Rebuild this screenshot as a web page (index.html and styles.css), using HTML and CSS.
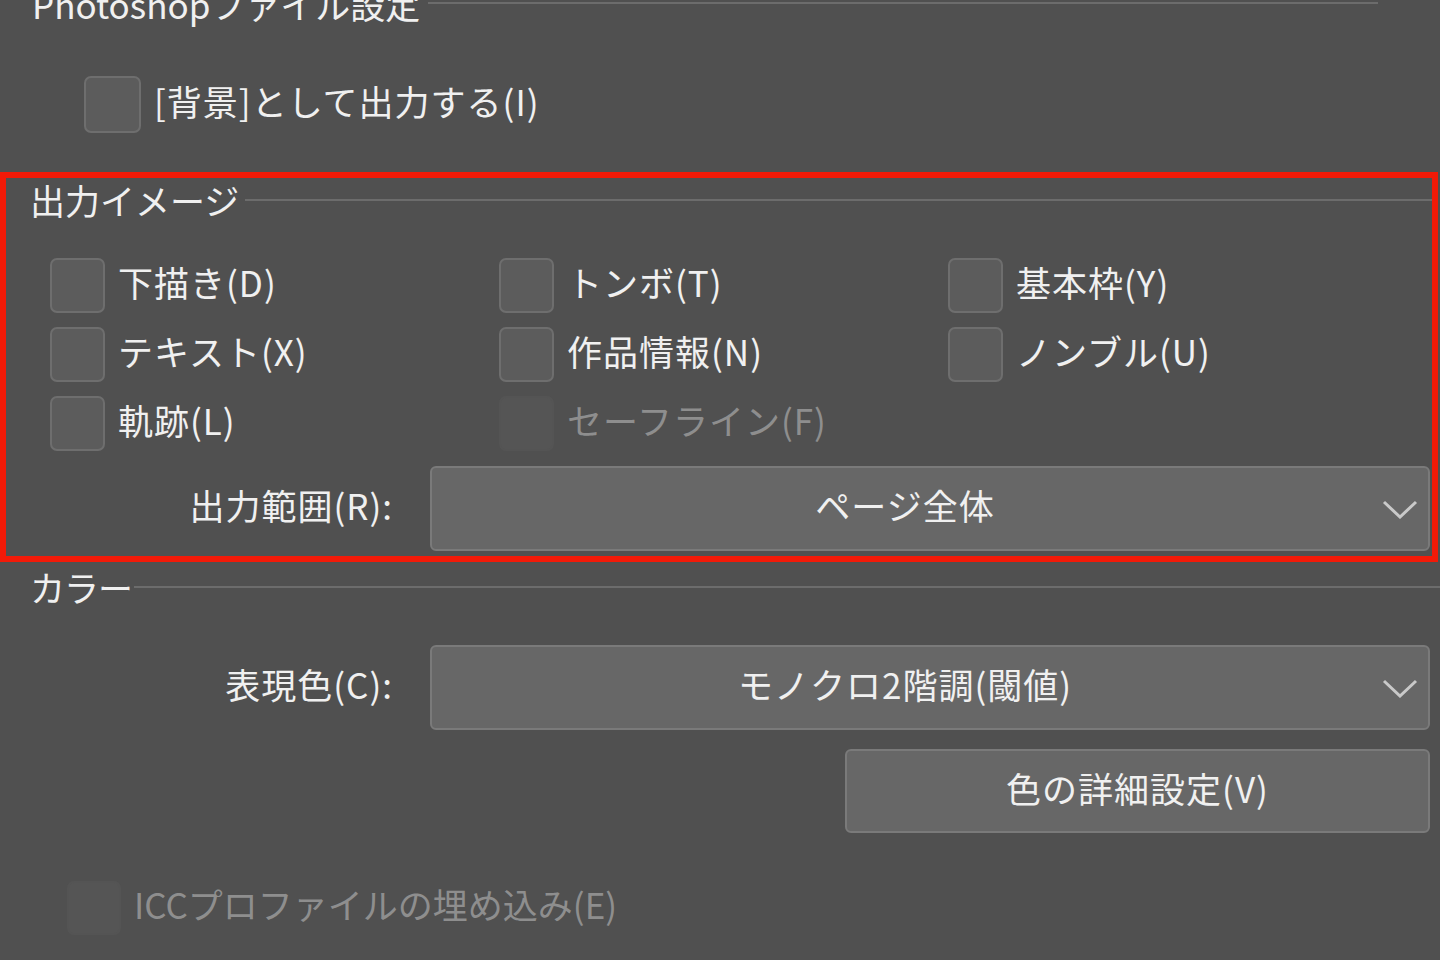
FILE: index.html
```html
<!DOCTYPE html>
<html lang="ja">
<head>
<meta charset="utf-8">
<title>書き出し設定</title>
<link rel="stylesheet" href="styles.css">
</head>
<body>
<div class="page">
  <section class="group group-ps">
    <div class="legend legend-ps"><span class="legend-text">Photoshopファイル設定</span><i class="rule"></i></div>
    <label class="check check-bg"><span class="box box-lg"></span><span class="check-label">[背景]として出力する(I)</span></label>
  </section>

  <section class="group group-image">
    <div class="legend legend-image"><span class="legend-text">出力イメージ</span><i class="rule"></i></div>
    <div class="grid">
      <label class="check"><span class="box"></span><span class="check-label">下描き(D)</span></label>
      <label class="check"><span class="box"></span><span class="check-label">トンボ(T)</span></label>
      <label class="check"><span class="box"></span><span class="check-label">基本枠(Y)</span></label>
      <label class="check"><span class="box"></span><span class="check-label">テキスト(X)</span></label>
      <label class="check"><span class="box"></span><span class="check-label">作品情報(N)</span></label>
      <label class="check"><span class="box"></span><span class="check-label">ノンブル(U)</span></label>
      <label class="check"><span class="box"></span><span class="check-label">軌跡(L)</span></label>
      <label class="check disabled"><span class="box"></span><span class="check-label">セーフライン(F)</span></label>
    </div>
    <div class="field field-range">
      <span class="field-label">出力範囲(R):</span>
      <div class="select">
        <span class="select-text">ページ全体</span>
        <svg class="chev" viewBox="0 0 36 20" width="36" height="20"><polyline points="2,3 18,18 34,3" fill="none" stroke="#c9c9c9" stroke-width="3"/></svg>
      </div>
    </div>
  </section>

  <section class="group group-color">
    <div class="legend legend-color"><span class="legend-text">カラー</span><i class="rule"></i></div>
    <div class="field field-color">
      <span class="field-label">表現色(C):</span>
      <div class="select">
        <span class="select-text">モノクロ2階調(閾値)</span>
        <svg class="chev" viewBox="0 0 36 20" width="36" height="20"><polyline points="2,3 18,18 34,3" fill="none" stroke="#c9c9c9" stroke-width="3"/></svg>
      </div>
    </div>
    <div class="btn-row"><button class="btn" type="button"><span class="btn-text">色の詳細設定(V)</span></button></div>
    <label class="check disabled check-icc"><span class="box"></span><span class="check-label">ICCプロファイルの埋め込み(E)</span></label>
  </section>
</div>
</body>
</html>
```
FILE: styles.css
```css
* { box-sizing: border-box; }
html, body {
  margin: 0;
  padding: 0;
  background: #505050;
}
body {
  width: 1440px;
  height: 960px;
  overflow: hidden;
  font-family: "Noto Sans CJK JP", "Noto Sans", sans-serif;
  font-size: 35px;
  line-height: 40px;
  letter-spacing: 1px;
  color: #f0f0f0;
}
.page {
  width: 1440px;
}
.legend {
  display: flex;
  align-items: center;
  height: 40px;
}
.legend-text {
  white-space: nowrap;
  padding-bottom: 4px;
  letter-spacing: 0;
}
.rule {
  flex: 1;
  height: 2px;
  background: #6c6c6c;
  margin-left: 8px;
}
.legend-ps {
  margin-top: -14px;
  padding-left: 32px;
}
.legend-ps .rule {
  margin-right: 62px;
  margin-top: -6px;
}
.check {
  display: flex;
  align-items: center;
  height: 55px;
}
.box {
  width: 55px;
  height: 55px;
  border: 2px solid #6e6e6e;
  background: #5c5c5c;
  border-radius: 7px;
  flex: none;
}
.box-lg {
  width: 57px;
  height: 57px;
}
.check-label {
  margin-left: 13px;
  white-space: nowrap;
  padding-bottom: 7px;
}
.check-bg {
  margin-top: 50px;
  padding-left: 84px;
  height: 57px;
}
.disabled .box {
  border-color: #545454;
  background: #555555;
}
.disabled .check-label {
  color: #8e8e8e;
}

.group-image {
  margin-top: 39px;
  width: 1438px;
  border: 6px solid #f21a08;
  padding: 4px 0 5px 0;
}
.legend-image {
  padding-left: 24px;
}
.legend-image .rule {
  margin-left: 6px;
  margin-top: -4px;
}
.grid {
  margin-top: 36px;
  padding-left: 44px;
  display: grid;
  grid-template-columns: 449px 449px 1fr;
  grid-auto-rows: 55px;
  row-gap: 14px;
}
.field {
  display: flex;
  align-items: center;
}
.field-label {
  text-align: right;
  white-space: nowrap;
  padding-bottom: 7px;
}
.field-range {
  margin-top: 15px;
}
.field-range .field-label {
  width: 387px;
}
.field-range .select {
  margin-right: 2px;
}
.select {
  flex: 1;
  margin-left: 37px;
  height: 85px;
  display: flex;
  align-items: center;
  background: #676767;
  border: 2px solid #7a7a7a;
  border-radius: 6px;
}
.select-text {
  flex: 1;
  text-align: center;
  white-space: nowrap;
  padding-bottom: 7px;
}
.chev {
  flex: none;
  margin: 0 10px 0 4px;
}

.legend-color {
  margin-top: 7px;
  padding-left: 30px;
}
.legend-color .rule {
  margin-left: 2px;
  margin-top: -4px;
}
.legend-color .legend-text {
  letter-spacing: -1px;
}
.field-color {
  margin-top: 36px;
}
.field-color .field-label {
  width: 393px;
}
.field-color .select {
  margin-right: 10px;
}
.btn-row {
  margin-top: 19px;
  padding-left: 845px;
}
.btn {
  display: flex;
  align-items: center;
  justify-content: center;
  width: 585px;
  height: 84px;
  background: #676767;
  border: 2px solid #7a7a7a;
  border-radius: 6px;
  color: #f0f0f0;
  font: inherit;
  letter-spacing: 1px;
  padding: 0;
}
.btn-text {
  padding-bottom: 7px;
}
.check-icc {
  margin-top: 47px;
  padding-left: 67px;
}
.check-icc .box {
  width: 54px;
  height: 54px;
}
.check-icc .check-label {
  letter-spacing: 0;
}
```
